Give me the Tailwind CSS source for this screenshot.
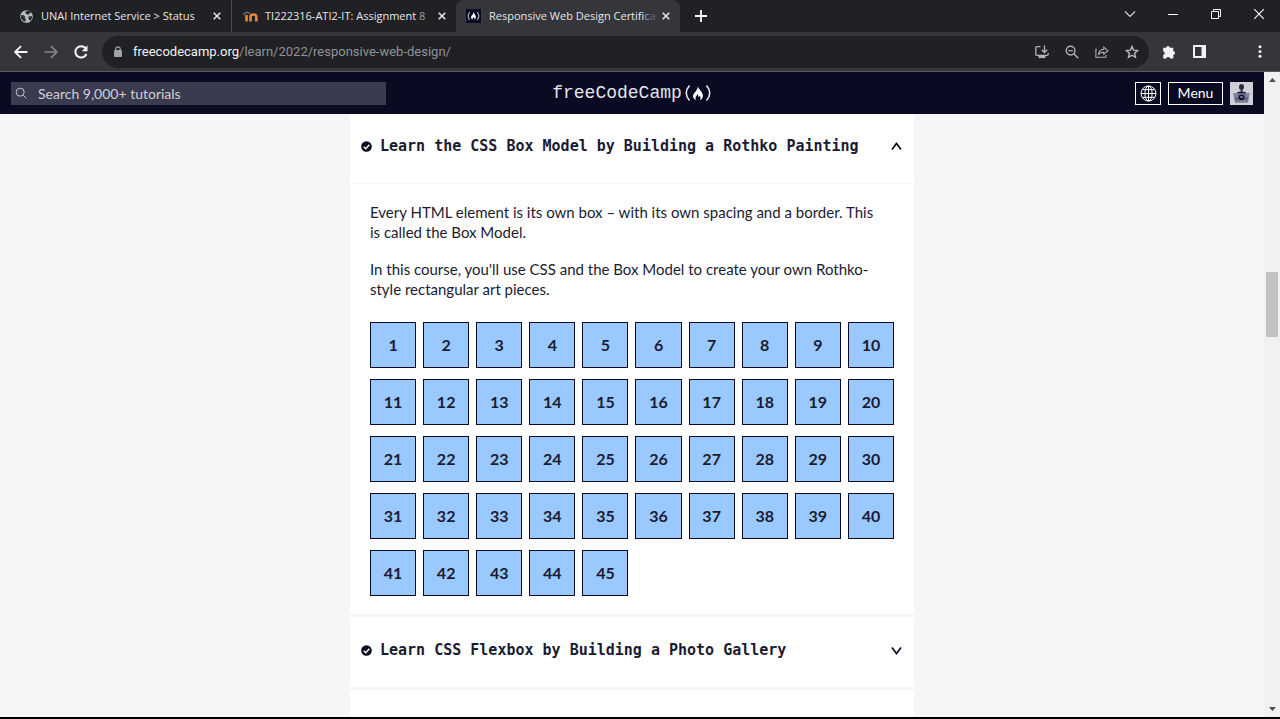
<!DOCTYPE html>
<html lang="en">
<head>
<meta charset="utf-8">
<title>Responsive Web Design Certification</title>
<script src="https://cdn.jsdelivr.net/npm/@tailwindcss/browser@4"></script>
</head>
<body class="flex h-screen flex-col overflow-hidden bg-[#f4f5f7] font-['Lato',sans-serif] text-[#1b1b32]">

<!-- Tab strip -->
<div class="flex h-8 shrink-0 items-stretch bg-[#202124] font-['Open_Sans',sans-serif] text-[11px] text-[#e4e6e9]">
  <div class="flex w-[232px] items-center border-r border-[#4a4c50] pl-5 pr-1.5">
    <svg class="mr-2 size-[13px] shrink-0" viewBox="0 0 14 14"><circle cx="7" cy="7" r="6.8" fill="#b9bcc0"/><path d="M1 5.500l3 .2 1.500 1.300-.3 1.600 1 1.200-.2 2.800-2.300-.8L.8 9zM6.500 1l4 .2 1.800 2-2.100.4-1 1.600-2.300-.5-1.100-1.500zM9 7l3.500-.6.7 2-2 3.100-1.800-1.400z" fill="#2b2d30"/></svg>
    <span class="flex-1 whitespace-nowrap">UNAI Internet Service &gt; Status</span>
    <button aria-label="Close tab" class="grid size-4 place-items-center"><svg class="size-2" viewBox="0 0 8 8" stroke="#e8eaed" stroke-width="1.500"><path d="M.7.7l6.600 6.600M7.300.7L.7 7.300"/></svg></button>
  </div>
  <div class="flex w-[224px] items-center pl-2.5 pr-1.5">
    <svg class="mr-1.5 h-[12px] w-[17px] shrink-0" viewBox="0 0 17 12" fill="none"><path d="M1 4.500L5 2l3 1.500" stroke="#686868" stroke-width="1.500"/><path d="M4.500 11.500V5M8.500 11.500V6.800q0-2.300 2.900-2.300t2.900 2.300v4.700" stroke="#e8853a" stroke-width="2.600"/></svg>
    <span class="flex-1 whitespace-nowrap">TI222316-ATI2-IT: Assignment <span class="text-[#9a9c9f]">8</span></span>
    <button aria-label="Close tab" class="grid size-4 place-items-center"><svg class="size-2" viewBox="0 0 8 8" stroke="#e8eaed" stroke-width="1.500"><path d="M.7.7l6.600 6.600M7.300.7L.7 7.300"/></svg></button>
  </div>
  <div class="flex w-[224px] items-center rounded-t-lg bg-[#35363a] pl-2.5 pr-1.5">
    <svg class="mr-2 h-[14px] w-[15px] shrink-0" viewBox="0 0 15 14" fill="none"><path fill="#0a0a23" d="M0 0h15v14H0z"/><path d="M3.500 3Q.5 7 3.500 11M11.500 3q3 4 0 8" stroke="#d0d0d8"/><path d="M7.500 3c.8 2 2.600 3.500 2.300 5.500-.2 1.300-1 1.900-1.500 2 .5-1-.1-2-.8-2.500-.6.900-1.200 1.500-.6 2.500C4 9.500 5 7 6.500 5.800 7.200 5 7.400 4 7.500 3z" fill="#fff"/></svg>
    <span class="flex-1 whitespace-nowrap">Responsive Web Design Certifi<span class="text-[#a0a2a5]">c</span><span class="text-[#66686b]">a</span></span>
    <button aria-label="Close tab" class="grid size-4 place-items-center"><svg class="size-2" viewBox="0 0 8 8" stroke="#e8eaed" stroke-width="1.500"><path d="M.7.7l6.600 6.600M7.300.7L.7 7.300"/></svg></button>
  </div>
  <button aria-label="New tab" class="ml-3 grid w-[18px] place-items-center"><svg class="size-3" viewBox="0 0 12 12" stroke="#fff" stroke-width="1.800"><path d="M6 0v12M0 6h12"/></svg></button>
  <div class="ml-auto flex items-center pb-1">
    <button aria-label="Search tabs" class="grid w-[43px] place-items-center"><svg class="h-3 w-3" viewBox="0 0 12 12" fill="none" stroke="#d5d7da" stroke-width="1.200"><path d="M1 3.500l5 5 5-5"/></svg></button>
    <button aria-label="Minimize" class="grid w-[43px] place-items-center"><svg class="h-3 w-3" viewBox="0 0 12 12" stroke="#fff" stroke-width="1"><path d="M1 6.500h10"/></svg></button>
    <button aria-label="Restore" class="grid w-[43px] place-items-center"><svg class="h-3 w-3" viewBox="0 0 12 12" fill="none" stroke="#fff"><path d="M1.500 3.500h7v7h-7zM3.500 3V1.500h7v7H9"/></svg></button>
    <button aria-label="Close" class="grid w-[43px] place-items-center"><svg class="h-3 w-3" viewBox="0 0 12 12" stroke="#fff" stroke-width="1.100"><path d="M1.200 1.200l9.600 9.600M10.800 1.200l-9.600 9.600"/></svg></button>
  </div>
</div>

<!-- Address bar -->
<div class="flex h-10 shrink-0 items-center border-b border-[#5a5b5f] bg-[#35363a] pl-3.5 pr-[18px]">
  <button aria-label="Back"><svg class="size-[14px]" viewBox="0 0 14 14" fill="none" stroke="#f1f3f4" stroke-width="1.900"><path d="M13.500 7H1.500M7 1.200L1.200 7 7 12.800"/></svg></button>
  <button aria-label="Forward" class="ml-4"><svg class="size-[14px]" viewBox="0 0 14 14" fill="none" stroke="#86888b" stroke-width="1.700"><path d="M.5 7h12M7 1.200L12.800 7 7 12.800"/></svg></button>
  <button aria-label="Reload" class="ml-4"><svg class="size-[14px]" viewBox="0 0 14 14" fill="none" stroke="#f1f3f4" stroke-width="2"><path d="M12.400 9A5.700 5.700 0 1 1 11.500 3.200"/><path d="M13.500.3v6H7.800z" fill="#f1f3f4" stroke="none"/></svg></button>
  <div class="ml-3.5 flex h-8 flex-1 items-center rounded-full bg-[#202124] pl-3 pr-2.5">
    <svg class="mr-[11px] h-[11px] w-2 shrink-0" viewBox="0 0 8 11" fill="none"><path d="M1.800 5V3a2.200 2.200 0 0 1 4.400 0v2" stroke="#a0a3a7" stroke-width="1.200"/><rect y="4" width="8" height="7" rx="1" fill="#a0a3a7"/></svg>
    <span class="flex-1 whitespace-nowrap font-['Roboto',sans-serif] text-[13px] text-[#8f9296]"><span class="text-[#f1f3f4]">freecodecamp.org</span>/learn/2022/responsive-web-design/</span>
    <div class="flex items-center gap-4">
      <button aria-label="Install"><svg class="size-[14px]" viewBox="0 0 14 14" fill="none" stroke="#b0b3b7" stroke-width="1.300"><path d="M5.500 1.700H1.800q-1 0-1 1v6.600q0 1 1 1h10.400q1 0 1-1V8M9.500.5v6.800M6.700 4.700l2.800 2.800 2.800-2.800"/><path d="M3.500 10.500h7v2.600h-7z" fill="#b0b3b7" stroke="none"/></svg></button>
      <button aria-label="Zoom"><svg class="size-[14px]" viewBox="0 0 14 14" fill="none" stroke="#b0b3b7" stroke-width="1.400"><circle cx="5.600" cy="5.600" r="4.400"/><path d="M9 9l4.300 4.300M3.400 5.600h4.400"/></svg></button>
      <button aria-label="Share"><svg class="size-[14px]" viewBox="0 0 16 14" fill="none" stroke="#b0b3b7" stroke-width="1.200"><path d="M2 4H1v9h11.500v-2.500M10 1.500l4.800 4L10 9.500V7.300C7 7.200 5 8.200 4 10c.2-3.500 2.200-5.800 6-6.200z"/></svg></button>
      <button aria-label="Bookmark"><svg class="size-[14px]" viewBox="0 0 14 14" fill="none" stroke="#b8bbbf" stroke-width="1.400"><path d="M7 1.500l1.600 3.700 4 .4-3 2.700.9 4L7 10.200l-3.500 2.100.9-4-3-2.700 4-.4z"/></svg></button>
    </div>
  </div>
  <button aria-label="Extensions" class="ml-[13px]"><svg class="size-[14px]" viewBox="0 0 14 14" fill="#f1f3f4"><path d="M1.200 2.700h3a1.800 1.800 0 1 1 3.600 0h3.500v3.500a1.800 1.800 0 1 1 0 3.600v3.700H8a1.900 1.900 0 0 0-3.700 0H1.200V10a1.900 1.900 0 0 0 0-3.700z"/></svg></button>
  <button aria-label="Side panel" class="ml-[17px]"><svg class="size-[13px]" viewBox="0 0 13 13"><path fill="#f1f3f4" d="M0 0h13v13H0z"/><path fill="#35363a" d="M2 2h6.500v9H2z"/></svg></button>
  <button aria-label="More" class="ml-[52px]"><svg class="h-[13px] w-1" viewBox="0 0 4 13" fill="#f1f3f4"><circle cx="2" cy="1.800" r="1.500"/><circle cx="2" cy="6.500" r="1.500"/><circle cx="2" cy="11.200" r="1.500"/></svg></button>
</div>

<div class="flex min-h-0 flex-1">
  <div class="flex min-w-0 flex-1 flex-col">
    <!-- Site header -->
    <header class="grid h-[42px] shrink-0 grid-cols-[1fr_auto_1fr] items-center bg-[#0a0a23] pl-[11px] pr-[11px]">
      <label class="flex h-[23px] w-[375px] items-center bg-[#3b3b4f] pl-1">
        <svg class="size-3" viewBox="0 0 12 12" fill="none" stroke="#c4c4d0" stroke-width="1"><circle cx="5.200" cy="5.200" r="4"/><path d="M8.200 8.200l3.200 3.200"/></svg>
        <input type="search" aria-label="Search" placeholder="Search 9,000+ tutorials" class="ml-[11px] flex-1 bg-transparent text-[14px] outline-none placeholder:text-[#d0d0d5]">
      </label>
      <a href="#" class="flex items-center font-['Liberation_Mono',monospace] text-[18px] leading-5 text-[#e4e4ea]">freeCodeCamp
        <svg class="ml-0.5 h-[18px] w-7" viewBox="0 0 28 18" fill="none"><path d="M5.500 1.500Q-1 9 5.500 16.500M22.500 1.500Q29 9 22.500 16.500" stroke="#f0f0f5" stroke-width="1.500"/><path d="M13.600 2c.5 3 5.400 5.800 5.300 9.900-.1 2.200-1.500 3.600-3 4.100 1.300-2 .4-3.400-.4-4.300-.2.800-.6 1.200-1.200 1.400.3-1.400-.3-2.600-1-3.100.1 1.700-1.900 2.500-1.800 4.200 0 .8.300 1.400.8 1.800-2-.6-3.500-2.100-3.300-4.300.2-2 1.800-3 2.800-4.500C13 5.500 14 4 13.600 2z" fill="#fff"/></svg>
      </a>
      <div class="flex items-center justify-end">
        <button aria-label="Language" class="grid h-[23px] w-[26px] place-items-center border border-white"><svg class="size-[17px]" viewBox="0 0 17 17" fill="none" stroke="#fff"><circle cx="8.500" cy="8.500" r="7.500"/><ellipse cx="8.500" cy="8.500" rx="3.600" ry="7.500"/><path d="M8.500 1v15M1 8.500h15M2.200 4.700h12.600M2.200 12.300h12.600"/></svg></button>
        <button class="ml-[7px] h-[23px] w-[55px] border border-white text-[14px] leading-5 text-white">Menu</button>
        <a href="#" aria-label="Profile" class="ml-[7px] block size-[23px] bg-[#d0d0d5]"><svg class="size-full" viewBox="0 0 23 23"><ellipse cx="11.500" cy="5" rx="2.500" ry="3" fill="#2a2a40"/><path d="M10.700 7h1.600v3h-1.600z" fill="#2a2a40"/><path d="M6 12q0-2.500 5.500-2.500T17 12z" fill="#1b1b32"/><path d="M3.500 11h16L18 20.500H5z" fill="#64648c"/><path d="M3.500 11h4v4h-4zM15.500 11h4l-.6 4h-3.400z" fill="#8585ad"/><circle cx="11.500" cy="15.500" r="2.800" fill="#11112a"/><path d="M10 15h3" stroke="#b5b5cc"/><path d="M5 18.500h13v2H5z" fill="#858592"/></svg></a>
      </div>
    </header>

    <!-- Curriculum blocks -->
    <main class="mx-auto flex w-full max-w-[564px] flex-1 flex-col gap-[3px] overflow-hidden">
      <section class="bg-white">
        <h3 class="border-b border-[#f5f6f7]">
          <button aria-expanded="true" class="flex h-[69px] w-full items-center pb-1 pl-[11px] pr-3 font-['DejaVu_Sans_Mono',monospace] text-[15px] font-bold">
            <svg class="mr-2 size-[11px] shrink-0" viewBox="0 0 11 11"><circle cx="5.500" cy="5.500" r="5.300" fill="#0a0a23"/><path d="M2.700 5.700l2 2 3.700-4" fill="none" stroke="#fff" stroke-width="1.500"/></svg>
            <span class="flex-1 whitespace-nowrap text-left">Learn the CSS Box Model by Building a Rothko Painting</span>
            <svg class="size-[11px]" viewBox="0 0 11 11" fill="none" stroke="#0a0a23" stroke-width="1.700"><path d="M1 8.500L5.500 2.500 10 8.500"/></svg>
          </button>
        </h3>
        <div class="px-5 py-[18px]">
          <div class="max-w-[512px] space-y-[17px] text-[15px] leading-5">
            <p>Every HTML element is its own box – with its own spacing and a border. This is called the Box Model.</p>
            <p>In this course, you'll use CSS and the Box Model to create your own Rothko-style rectangular art pieces.</p>
          </div>
          <nav id="steps" aria-label="Steps" class="mt-[23px] grid grid-cols-10 gap-x-[7px] gap-y-[11px] text-[16px] font-bold"></nav>
        </div>
      </section>
      <section class="bg-white">
        <h3>
          <button aria-expanded="false" class="flex h-[70px] w-full items-center pb-1 pl-[11px] pr-3 font-['DejaVu_Sans_Mono',monospace] text-[15px] font-bold">
            <svg class="mr-2 size-[11px] shrink-0" viewBox="0 0 11 11"><circle cx="5.500" cy="5.500" r="5.300" fill="#0a0a23"/><path d="M2.700 5.700l2 2 3.700-4" fill="none" stroke="#fff" stroke-width="1.500"/></svg>
            <span class="flex-1 whitespace-nowrap text-left">Learn CSS Flexbox by Building a Photo Gallery</span>
            <svg class="size-[11px]" viewBox="0 0 11 11" fill="none" stroke="#0a0a23" stroke-width="1.700"><path d="M1 2.500l4.500 6L10 2.500"/></svg>
          </button>
        </h3>
      </section>
      <section class="flex-1 bg-white"></section>
    </main>
  </div>

  <!-- Scroll bar -->
  <div class="flex w-4 shrink-0 flex-col items-center bg-[#f1f1f1] py-1.5" aria-hidden="true">
    <svg class="h-1 w-[7px]" viewBox="0 0 7 4" fill="#505050"><path d="M3.500 0L7 4H0z"/></svg>
    <div class="h-[190px]"></div>
    <div class="h-[65px] w-3 bg-[#c1c1c1]"></div>
    <svg class="mt-auto h-1 w-[7px]" viewBox="0 0 7 4" fill="#505050"><path d="M0 0h7L3.500 4z"/></svg>
  </div>
</div>
<div class="h-[2px] shrink-0 bg-black"></div>

<script>
  const steps = document.getElementById('steps');
  for (let n = 1; n <= 45; n++) {
    const link = document.createElement('a');
    link.href = '#step-' + n;
    link.textContent = n;
    link.className = 'flex h-[46px] items-center justify-center border border-[#0a0a23] bg-[#99c9ff]';
    steps.append(link);
  }
</script>
</body>
</html>
